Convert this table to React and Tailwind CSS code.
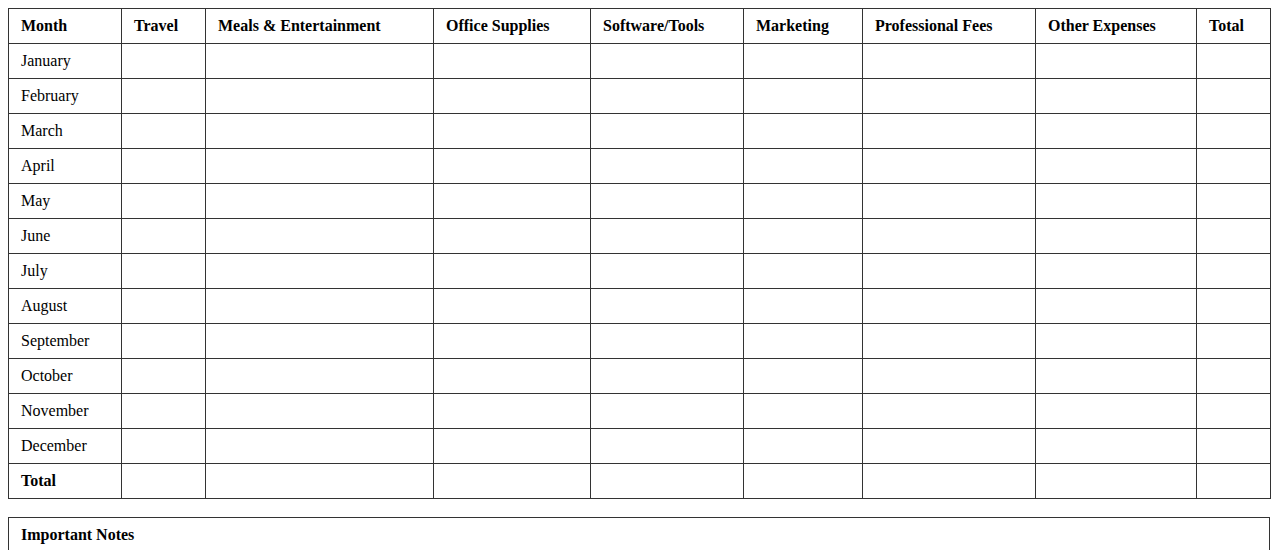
const columns = [
  { label: "Month", w: "w-[113px]" },
  { label: "Travel", w: "w-[84px]" },
  { label: "Meals & Entertainment", w: "w-[228px]" },
  { label: "Office Supplies", w: "w-[157px]" },
  { label: "Software/Tools", w: "w-[153px]" },
  { label: "Marketing", w: "w-[119px]" },
  { label: "Professional Fees", w: "w-[173px]" },
  { label: "Other Expenses", w: "w-[161px]" },
  { label: "Total", w: "w-[74px]" },
];

const months = [
  "January",
  "February",
  "March",
  "April",
  "May",
  "June",
  "July",
  "August",
  "September",
  "October",
  "November",
  "December",
];

const cell = "border border-[#333] px-3 py-2 text-left align-middle leading-[18px] h-[35px]";

export default function App() {
  return (
    <div className="p-2 bg-white text-black text-[16px] font-['Liberation_Serif','Times_New_Roman',serif]">
      {/* Expense grid */}
      <table className="w-full table-fixed border-collapse">
        <thead>
          <tr>
            {columns.map((c) => (
              <th key={c.label} className={`${cell} ${c.w} font-bold`}>
                {c.label}
              </th>
            ))}
          </tr>
        </thead>
        <tbody>
          {months.map((m) => (
            <tr key={m}>
              <td className={cell}>{m}</td>
              {columns.slice(1).map((c) => (
                <td key={c.label} className={cell}></td>
              ))}
            </tr>
          ))}
          <tr>
            <td className={`${cell} font-bold`}>Total</td>
            {columns.slice(1).map((c) => (
              <td key={c.label} className={cell}></td>
            ))}
          </tr>
        </tbody>
      </table>

      {/* Notes */}
      <div className="mt-[18px] border border-[#333] px-3 py-2 h-[120px]">
        <p className="font-bold leading-[18px]">Important Notes</p>
      </div>
    </div>
  );
}
